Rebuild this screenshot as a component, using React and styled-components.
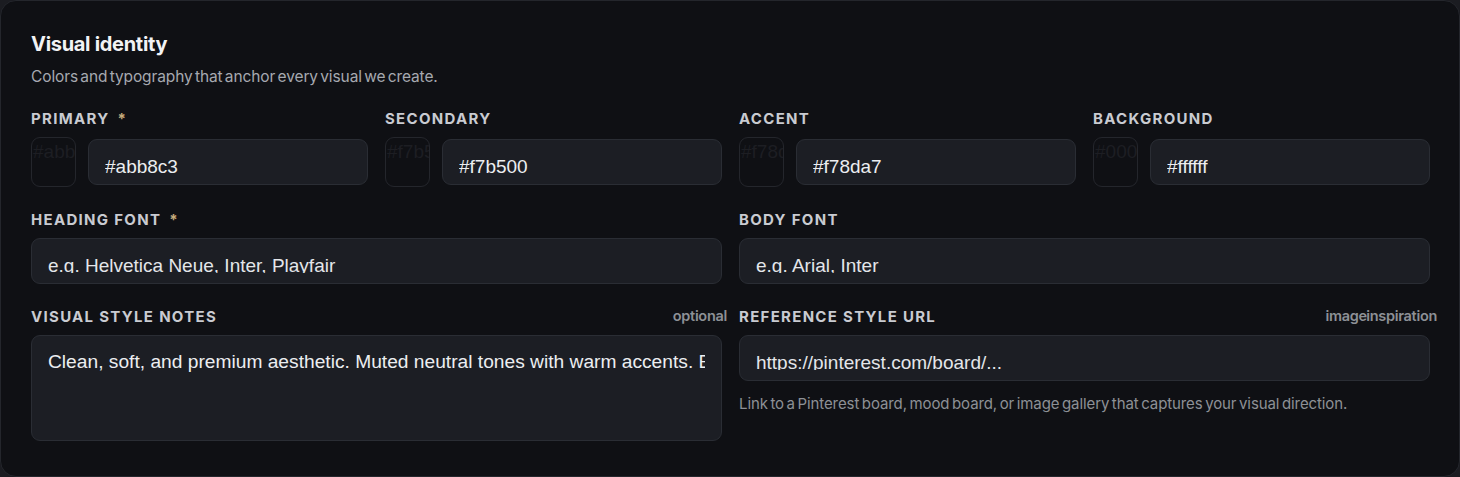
import React, { useState } from "react";
import styled, { createGlobalStyle } from "styled-components";

const GlobalStyle = createGlobalStyle`
  html, body {
    margin: 0;
    padding: 0;
    background: #1b1c21;
  }
  * {
    box-sizing: border-box;
  }
`;

const Card = styled.section`
  width: 1460px;
  height: 477px;
  background: #0f1014;
  border: 1px solid #24262c;
  border-radius: 16px;
  padding: 31px 29px 35px 30px;
  font-family: Inter, "Noto Sans", sans-serif;
`;

const Title = styled.h2`
  margin: 0;
  font-size: 20px;
  line-height: 24px;
  font-weight: 700;
  color: #f2f3f5;
  letter-spacing: -0.3px;
`;

const Subtitle = styled.p`
  margin: 11px 0 0;
  font-size: 15.5px;
  line-height: 20px;
  color: #a6a9b0;
  letter-spacing: -0.1px;
  word-spacing: -2px;
`;

const Form = styled.div`
  margin-top: 22px;
  display: grid;
  grid-template-columns: repeat(4, 1fr);
  column-gap: 17px;
  row-gap: 23px;
  align-items: start;
`;

const Field = styled.div`
  grid-column: span ${(p) => p.$span || 1};
  display: flex;
  flex-direction: column;
  gap: 8px;
`;

const LabelRow = styled.div`
  display: flex;
  align-items: center;
  justify-content: space-between;
  height: 20px;
  margin-right: ${(p) => p.$overhang || 0}px;
`;

const Label = styled.label`
  font-size: 15px;
  line-height: 20px;
  font-weight: 700;
  letter-spacing: 1.3px;
  text-transform: uppercase;
  color: #c9cbd1;
`;

const Required = styled.span`
  color: #c6ab7c;
  margin-left: 8px;
`;

const Hint = styled.span`
  font-size: 14.5px;
  font-weight: 600;
  color: #8d9096;
  letter-spacing: -0.3px;
  word-spacing: -4px;
  margin-top: -4px;
`;

const ColorRow = styled.div`
  display: flex;
  align-items: center;
  gap: 12px;
  height: 50px;
`;

const Swatch = styled.div`
  flex: 0 0 45px;
  height: 50px;
  border: 1px solid #24262c;
  border-radius: 9px;
  overflow: hidden;
  padding: 3px 0 0 1px;
  font-family: "Liberation Sans", Arial, sans-serif;
  font-size: 19px;
  line-height: 22px;
  white-space: nowrap;
  color: #1d1e23;
`;

const InputShell = styled.div`
  flex: ${(p) => (p.$grow ? 1 : "none")};
  min-width: 0;
  height: ${(p) => p.$height || 46}px;
  padding: 0 16px;
  background: #1c1e24;
  border: 1px solid #2a2d34;
  border-radius: 9px;
  overflow: hidden;
`;

const BareInput = styled.input`
  display: block;
  width: 100%;
  height: 44px;
  margin: 0;
  padding: 10px 0 0;
  background: transparent;
  border: none;
  color: #eceef1;
  font-family: "Liberation Sans", Arial, sans-serif;
  font-size: 19px;
  outline: none;
  clip-path: inset(0 0 10px 0);

  &::placeholder {
    color: #e4e6ea;
    opacity: 1;
  }
`;

const NotesInput = styled.textarea`
  display: block;
  width: 100%;
  height: 100%;
  margin: 0;
  padding: 15px 0 0;
  background: transparent;
  border: none;
  color: #eceef1;
  font-family: "Liberation Sans", Arial, sans-serif;
  font-size: 19.2px;
  line-height: 22px;
  resize: none;
  overflow: hidden;
  white-space: pre;
  outline: none;
`;

const Helper = styled.p`
  margin: 5px 0 0;
  font-size: 15px;
  line-height: 20px;
  color: #8d9096;
  letter-spacing: -0.1px;
  word-spacing: -1.5px;
`;

const colorFields = [
  { key: "primary", label: "Primary", required: true, value: "#abb8c3" },
  { key: "secondary", label: "Secondary", value: "#f7b500" },
  { key: "accent", label: "Accent", value: "#f78da7" },
  { key: "background", label: "Background", value: "#ffffff", swatch: "#000000" },
];

function ColorField({ label, required, value, swatch, onChange }) {
  return (
    <Field>
      <LabelRow>
        <Label>
          {label}
          {required && <Required>*</Required>}
        </Label>
      </LabelRow>
      <ColorRow>
        <Swatch>{swatch || value}</Swatch>
        <InputShell $grow>
          <BareInput value={value} onChange={(e) => onChange(e.target.value)} />
        </InputShell>
      </ColorRow>
    </Field>
  );
}

export default function App() {
  const [colors, setColors] = useState(
    Object.fromEntries(colorFields.map((f) => [f.key, f.value]))
  );
  const [headingFont, setHeadingFont] = useState("");
  const [bodyFont, setBodyFont] = useState("");
  const [notes, setNotes] = useState(
    "Clean, soft, and premium aesthetic. Muted neutral tones with warm accents. Editorial photography with natural light."
  );
  const [refUrl, setRefUrl] = useState("");

  return (
    <>
      <GlobalStyle />
      <Card>
        <Title>Visual identity</Title>
        <Subtitle>Colors and typography that anchor every visual we create.</Subtitle>
        <Form>
          {colorFields.map((f) => (
            <ColorField
              key={f.key}
              label={f.label}
              required={f.required}
              swatch={f.swatch}
              value={colors[f.key]}
              onChange={(v) => setColors((c) => ({ ...c, [f.key]: v }))}
            />
          ))}

          <Field $span={2}>
            <LabelRow>
              <Label>
                Heading font<Required>*</Required>
              </Label>
            </LabelRow>
            <InputShell>
              <BareInput
                placeholder="e.g. Helvetica Neue, Inter, Playfair"
                value={headingFont}
                onChange={(e) => setHeadingFont(e.target.value)}
              />
            </InputShell>
          </Field>
          <Field $span={2}>
            <LabelRow>
              <Label>Body font</Label>
            </LabelRow>
            <InputShell>
              <BareInput
                placeholder="e.g. Arial, Inter"
                value={bodyFont}
                onChange={(e) => setBodyFont(e.target.value)}
              />
            </InputShell>
          </Field>

          <Field $span={2}>
            <LabelRow $overhang={-5}>
              <Label>Visual style notes</Label>
              <Hint>optional</Hint>
            </LabelRow>
            <InputShell $height={106}>
              <NotesInput
                wrap="off"
                value={notes}
                onChange={(e) => setNotes(e.target.value)}
              />
            </InputShell>
          </Field>
          <Field $span={2}>
            <LabelRow $overhang={-7}>
              <Label>Reference style URL</Label>
              <Hint>image inspiration</Hint>
            </LabelRow>
            <InputShell>
              <BareInput
                placeholder="https://pinterest.com/board/..."
                value={refUrl}
                onChange={(e) => setRefUrl(e.target.value)}
              />
            </InputShell>
            <Helper>
              Link to a Pinterest board, mood board, or image gallery that captures your visual direction.
            </Helper>
          </Field>
        </Form>
      </Card>
    </>
  );
}
